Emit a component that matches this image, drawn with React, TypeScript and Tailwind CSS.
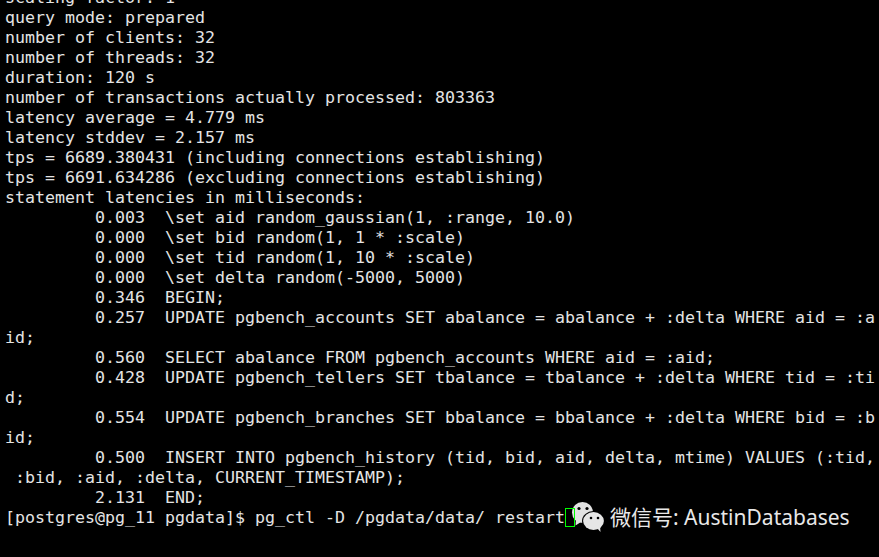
const lines = [
  'scaling factor: 1',
  'query mode: prepared',
  'number of clients: 32',
  'number of threads: 32',
  'duration: 120 s',
  'number of transactions actually processed: 803363',
  'latency average = 4.779 ms',
  'latency stddev = 2.157 ms',
  'tps = 6689.380431 (including connections establishing)',
  'tps = 6691.634286 (excluding connections establishing)',
  'statement latencies in milliseconds:',
  '         0.003  \\set aid random_gaussian(1, :range, 10.0)',
  '         0.000  \\set bid random(1, 1 * :scale)',
  '         0.000  \\set tid random(1, 10 * :scale)',
  '         0.000  \\set delta random(-5000, 5000)',
  '         0.346  BEGIN;',
  '         0.257  UPDATE pgbench_accounts SET abalance = abalance + :delta WHERE aid = :a',
  'id;',
  '         0.560  SELECT abalance FROM pgbench_accounts WHERE aid = :aid;',
  '         0.428  UPDATE pgbench_tellers SET tbalance = tbalance + :delta WHERE tid = :ti',
  'd;',
  '         0.554  UPDATE pgbench_branches SET bbalance = bbalance + :delta WHERE bid = :b',
  'id;',
  '         0.500  INSERT INTO pgbench_history (tid, bid, aid, delta, mtime) VALUES (:tid,',
  ' :bid, :aid, :delta, CURRENT_TIMESTAMP);',
  '         2.131  END;',
];

function WeChatLogo() {
  return (
    <svg width="36" height="32" viewBox="0 0 36 32" className="absolute left-[570px] top-[501px]">
      <ellipse cx="12.5" cy="11.5" rx="10.5" ry="10.5" fill="#e2e2e2" />
      <path d="M6 18 L5.5 24.5 L11 21 Z" fill="#e2e2e2" />
      <circle cx="9" cy="7.5" r="1.6" fill="#000" />
      <circle cx="17" cy="7.5" r="1.6" fill="#000" />
      <ellipse cx="23.5" cy="20" rx="11.5" ry="10" fill="#000" />
      <ellipse cx="23.5" cy="20" rx="10.4" ry="9" fill="#e6e6e6" />
      <path d="M27 27 L30.5 31 L30 25 Z" fill="#e6e6e6" />
      <circle cx="21" cy="17" r="1.3" fill="#000" />
      <circle cx="28" cy="17" r="1.3" fill="#000" />
    </svg>
  );
}

export default function App() {
  return (
    <div className="relative h-[557px] w-[879px] overflow-hidden bg-black text-[#e4e4e4]">
      <div className="pl-[5px] mt-[-12px] font-['DejaVu_Sans_Mono','Liberation_Mono',monospace] text-[16.62px] leading-[20px] whitespace-pre">
        {lines.map((line, i) => (
          <div key={i} className="h-[20px]">{line}</div>
        ))}
        <div className="flex h-[20px] items-start">
          <span>[postgres@pg_11 pgdata]$ pg_ctl -D /pgdata/data/ restart</span>
          <span className="relative z-10 h-[19px] w-[10px] border border-[#00ff00]" />
        </div>
      </div>

      {/* watermark */}
      <WeChatLogo />
      <div className="absolute left-[610px] top-[503px] font-['Noto_Sans','Noto_Sans_CJK_SC',sans-serif] text-[21px] leading-[28px] text-[#e8e8e8] whitespace-nowrap">
        微信号: AustinDatabases
      </div>
    </div>
  );
}
